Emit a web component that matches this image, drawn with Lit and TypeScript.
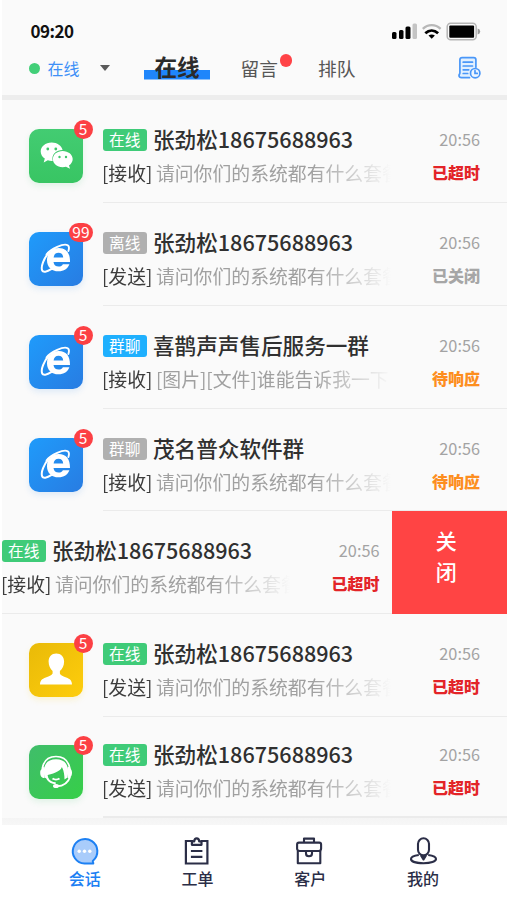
import { LitElement, html, css, svg } from "lit";
import { customElement, property } from "lit/decorators.js";
import { classMap } from "lit/directives/class-map.js";

interface Chat {
  avatar: "wechat" | "ie" | "person" | "agent";
  badge: string;
  tag: string;
  tagTone: "green" | "grey" | "blue";
  name: string;
  direction: string;
  text: string;
  status: string;
  statusTone: "late" | "closed" | "waiting";
  size?: "short" | "last";
  swiped?: boolean;
}

const QUESTION = "请问你们的系统都有什么套餐";
const CUSTOMER = "张劲松18675688963";

const CHATS: Chat[] = [
  { avatar: "wechat", badge: "5", tag: "在线", tagTone: "green", name: CUSTOMER, direction: "[接收]", text: QUESTION, status: "已超时", statusTone: "late" },
  { avatar: "ie", badge: "99", tag: "离线", tagTone: "grey", name: CUSTOMER, direction: "[发送]", text: QUESTION, status: "已关闭", statusTone: "closed" },
  { avatar: "ie", badge: "5", tag: "群聊", tagTone: "blue", name: "喜鹊声声售后服务一群", direction: "[接收]", text: "[图片][文件]谁能告诉我一下", status: "待响应", statusTone: "waiting" },
  { avatar: "ie", badge: "5", tag: "群聊", tagTone: "grey", name: "茂名普众软件群", direction: "[接收]", text: QUESTION, status: "待响应", statusTone: "waiting", size: "short" },
  { avatar: "wechat", badge: "", tag: "在线", tagTone: "green", name: CUSTOMER, direction: "[接收]", text: QUESTION, status: "已超时", statusTone: "late", swiped: true },
  { avatar: "person", badge: "5", tag: "在线", tagTone: "green", name: CUSTOMER, direction: "[发送]", text: QUESTION, status: "已超时", statusTone: "late" },
  { avatar: "agent", badge: "5", tag: "在线", tagTone: "green", name: CUSTOMER, direction: "[发送]", text: QUESTION, status: "已超时", statusTone: "late", size: "last" },
];

const GLYPHS = {
  wechat: svg`
    <path fill="#fff" d="M22.700 13.400c-6.300 0-11 4.100-11 9.100 0 2.900 1.500 5.400 4.100 7.100l-1.100 4 4.100-2.300c1.300.4 2.600.6 4 .6h.9c-.2-.7-.3-1.400-.3-2.100 0-5 4.400-8.700 9.700-8.700h.5c-1-4.500-5.400-7.700-10.900-7.700z"/>
    <path fill="#fff" d="M33.600 22c-5.600 0-9.700 3.600-9.700 8.100 0 4.500 4.100 8.200 9.700 8.200 1.200 0 2.400-.2 3.400-.5l4 2-1-3.300c2.300-1.500 3.700-3.800 3.700-6.400 0-4.500-4.500-8.100-10.100-8.100z"/>
    <circle cx="18.800" cy="20" r="1.400" fill="#3fc86b"/><circle cx="26.800" cy="20" r="1.400" fill="#3fc86b"/>
    <circle cx="30.500" cy="28" r="1.200" fill="#3fc86b"/><circle cx="37" cy="28" r="1.200" fill="#3fc86b"/>`,
  ie: svg`
    <path fill="#fff" fill-rule="evenodd" d="M41 30H24.500c.3 3 2.300 4.600 5.200 4.600 2 0 3.400-.8 4.200-2.300h6.500C38.800 36.800 34.900 39.300 29.500 39.300c-7 0-11.500-4.300-11.500-11.100C18 21 22.700 16 29.800 16 37 16 41.200 20.700 41 30zM24.600 25.600h9.600C34 22.500 32.400 20.800 29.500 20.800S25 22.600 24.600 25.600z"/>
    <path fill="none" stroke="#fff" stroke-width="1.900" stroke-linecap="round" d="M17.500 22.500C21.500 16.500 35 11 38.700 13.300c1.500 1 1.500 3.300.7 5.700"/>
    <path fill="none" stroke="#fff" stroke-width="2" stroke-linecap="round" d="M20 20.500C15 26 11.500 34.500 13.200 38.500c.8 1.900 4.600 1.600 9-1.300"/>`,
  person: svg`
    <path fill="#fff" d="M27.300 10.500c-4.700 0-7.700 3.400-7.700 8.100 0 4.200 1.700 7.500 4 9.300v2.600c-.4 1.600-3 2.500-6.800 4-4 1.500-5.600 3-5.800 6.900h32c-.2-3.900-1.800-5.400-5.800-6.900-3.800-1.500-6.100-2.400-6.300-4v-2.600c2.500-1.800 4.200-5.100 4.200-9.300 0-4.700-3.100-8.100-7.800-8.100z"/>`,
  agent: svg`
    <path fill="none" stroke="#fff" stroke-width="1.700" d="M13.200 24C14.500 15.500 20 11.500 27 11.500S39.500 15.500 41 24"/>
    <path fill="#fff" d="M14.200 22c.2 2-3 1.500-3 5.500 0 4.200 1.700 5.300 4.300 5.500V22zM40 22c.3 1.500 3 1.500 3 5.500s-1.700 5.500-4.300 5.500V22z"/>
    <path fill="#fff" d="M15.500 32.500C13 20 18 14.300 27 14.300S41 20 38.500 32.500l-3 2c0-4-.5-8.500-2.600-12.500-1 3.500-6 6-14.300 8l1 4.500z"/>
    <path fill="none" stroke="#fff" stroke-width="2" d="M18 33c2 3.500 4.500 5.200 8.700 5.200M41 32c-2 6-6.500 9-13 9.300M23.500 33.500c1.800 1.200 5.200 1.200 7 0"/>
    <ellipse cx="27" cy="41" rx="3" ry="2.100" fill="#fff"/>`,
};

@customElement("chat-avatar")
class ChatAvatar extends LitElement {
  @property() kind: Chat["avatar"] = "ie";
  @property() badge = "";

  static styles = css`
    :host { display: block; position: relative; width: 54px; height: 54px; }
    .tile { display: block; width: 54px; height: 54px; border-radius: 10px; }
    .wechat { background: linear-gradient(#43cc72, #38c563); box-shadow: 0 3px 6px rgba(56, 197, 99, .13); }
    .ie { background: linear-gradient(135deg, #1f9bfb, #287ce2); box-shadow: 0 3px 6px rgba(40, 130, 230, .13); }
    .person { background: linear-gradient(135deg, #e9ba08, #fecd0c); box-shadow: 0 3px 6px rgba(250, 200, 10, .15); }
    .agent { background: linear-gradient(135deg, #40bd6b, #36cf48); box-shadow: 0 3px 6px rgba(56, 197, 99, .13); }
    .badge {
      position: absolute; top: -9px; right: -9.500px; box-sizing: border-box;
      min-width: 19px; height: 19px; padding: 0 3px; border-radius: 10px;
      background: #fc4044; color: #fff; font-size: 15.500px; line-height: 17px; text-align: center;
    }
  `;

  render() {
    return html`
      <svg class="tile ${this.kind}" viewBox="0 0 54 54">${GLYPHS[this.kind]}</svg>
      <span class="badge">${this.badge}</span>`;
  }
}

@customElement("chat-row")
class ChatRow extends LitElement {
  @property({ attribute: false }) chat!: Chat;

  static styles = css`
    :host { display: block; }
    .row { display: flex; height: 103px; }
    .short { height: 102px; }
    .last { height: 101px; }
    .side { flex: none; width: 101px; box-sizing: border-box; padding: 29px 0 0 27px; }
    .last .side { padding-top: 27.500px; }
    .body {
      flex: 1; min-width: 0; box-sizing: border-box; padding: 24px 27px 0 0;
      border-bottom: 1px solid #ebebeb;
    }
    .last .body { padding-top: 22px; border-bottom-width: 2px; }
    .swiped .body { padding-right: 12px; }
    .line { display: flex; align-items: center; height: 32px; }
    .second { height: 34px; }
    .tag {
      flex: none; width: 43.500px; height: 22px; margin-right: 6.500px; border-radius: 3px; color: #fff;
      font-size: 15.700px; line-height: 21px; text-align: center;
    }
    .green { background: #3fcb78; }
    .grey { background: #b0b0b0; }
    .blue { background: #1fb0fe; }
    .name {
      flex: 1; margin-bottom: 1.500px; white-space: nowrap; color: #303030;
      font-size: 21.600px; font-weight: 500; line-height: 30px;
    }
    .time { margin-bottom: 1.500px; color: #a3a3a3; font-size: 16.300px; line-height: 30px; }
    .message {
      width: 312px; white-space: nowrap; color: #a0a0a0; font-size: 18.850px; line-height: 32px;
      -webkit-mask-image: linear-gradient(90deg, #000 210px, transparent 288px);
      mask-image: linear-gradient(90deg, #000 210px, transparent 288px);
    }
    .direction { margin: 0 3.500px 0 -1px; color: #3c3c3c; }
    .status { margin: 0 0 2px auto; font-size: 16px; font-weight: 900; line-height: 30px; white-space: nowrap; }
    .late { color: #e32428; }
    .closed { color: #a6a6a6; }
    .waiting { color: #fd8e1f; }
    .close {
      display: flex; flex-direction: column; align-items: center; flex: none; width: 115.500px; height: 103px;
      box-sizing: border-box; padding: 14px 6px 0 0; background: #ff4444; color: #fff;
      font-size: 21px; font-weight: 500; line-height: 31px;
    }
  `;

  render() {
    const c = this.chat;
    return html`
      <div class=${classMap({ row: true, short: c.size === "short", last: c.size === "last", swiped: !!c.swiped })}>
        ${c.swiped ? "" : html`<div class="side"><chat-avatar .kind=${c.avatar} .badge=${c.badge}></chat-avatar></div>`}
        <div class="body">
          <div class="line">
            <span class="tag ${c.tagTone}">${c.tag}</span>
            <span class="name">${c.name}</span>
            <span class="time">20:56</span>
          </div>
          <div class="line second">
            <div class="message"><span class="direction">${c.direction}</span>${c.text}</div>
            <span class="status ${c.statusTone}">${c.status}</span>
          </div>
        </div>
        ${c.swiped ? html`<div class="close"><span>关</span><span>闭</span></div>` : ""}
      </div>`;
  }
}

const NAV = [
  {
    label: "会话",
    icon: svg`<path fill="#a9ccfb" stroke="#1d80f3" stroke-width="2" stroke-linejoin="round" d="M23.300 26.600H14.500A12.300 12.300 0 1 1 23 23.700c-.8.900.3 1 .3 2.900z"/>
      <circle cx="9.200" cy="14.300" r="1.700" fill="#fff"/><circle cx="14.500" cy="14.300" r="1.700" fill="#fff"/><circle cx="19.800" cy="14.300" r="1.700" fill="#fff"/>`,
  },
  {
    label: "工单",
    icon: svg`<g fill="none" stroke="#2b2e47" stroke-width="2.200"><path d="M10 4H2.900v22.500h21.500V4h-6.500"/>
      <path stroke-linejoin="round" d="M8.900 7.800V4.300h2.300C11.400 2 12.400 1.300 13.700 1.300S16 2 16.200 4.300h2.300v3.500z"/><path d="M7.900 14h11.500M7.900 19.800h11.500"/></g>`,
  },
  {
    label: "客户",
    icon: svg`<g fill="none" stroke="#2b2e47" stroke-width="2.100" stroke-linejoin="round" transform="translate(-1.500 0)"><path d="M9.500 5.500V1.600h10v3.900M3.300 14v12.300h22.500V14"/>
      <path d="M4.400 5.600h20.400q1.800 0 1.800 2v3.800q0 2.600-2.600 2.600H5.200Q2.600 14 2.600 11.400V7.600q0-2 1.800-2z"/><path d="M11.500 14v2.500q0 2.800 3 2.800t3-2.800V14"/></g>`,
  },
  {
    label: "我的",
    icon: svg`<g fill="none" stroke="#2b2e47" stroke-width="2.100" stroke-linejoin="round"><rect x="9" y="1.300" width="11" height="17" rx="5.500"/>
      <path d="M9.800 18c-4.500.6-7.800 2-7.800 4 0 2.500 5.200 4.300 12.500 4.300S27 24.500 27 22c0-2-3.300-3.400-7.800-4"/><path fill="#2b2e47" d="M12.300 19l2.200 3.500 2.200-3.500z"/></g>`,
  },
];

@customElement("app-root")
class AppRoot extends LitElement {
  static styles = css`
    :host {
      display: flex; flex-direction: column; width: 507px; height: 900px; overflow: hidden; background: #fff;
      font-family: "Noto Sans CJK SC", "Noto Sans", sans-serif;
    }
    .screen { flex: none; height: 825px; margin-left: 2px; background: #fafafa; }
    .status { display: flex; align-items: center; height: 45px; padding: 16px 26px 0 28.500px; box-sizing: border-box; }
    .clock { flex: 1; font-size: 17px; font-weight: 700; line-height: 24px; color: #111; letter-spacing: -.5px; }
    .device { width: 92px; height: 20px; }
    .tabs { display: flex; align-items: center; height: 50px; padding: 0 26px 4px 27px; box-sizing: border-box; }
    .dot { width: 11px; height: 11px; border-radius: 50%; background: #42cf78; }
    .state { margin-left: 7.500px; color: #3e90f7; font-size: 16px; line-height: 24px; }
    .caret { width: 0; height: 0; margin: 0 33px 0 20.500px; border: 5.500px solid transparent; border-top: 6px solid #5a5a5a; border-bottom: 0; }
    .tab { width: 37px; color: #565656; font-size: 18.700px; line-height: 28px; white-space: nowrap; }
    .active {
      width: 66px; margin: 0 31px 0 .5px; padding-bottom: 3px; text-align: center; text-indent: 1px; color: #2b2b2b;
      font-size: 22.600px; font-weight: 700; line-height: 34px;
      background: linear-gradient(#1f86fb, #1f86fb) 0 20px / 66px 9.500px no-repeat;
    }
    .unread { position: relative; margin-right: 40.500px; }
    .unread::after {
      content: ""; position: absolute; right: -14.500px; top: 0; width: 12.500px; height: 12.500px; border-radius: 50%; background: #ff4347;
    }
    .history { width: 24px; height: 24px; margin-left: auto; }
    .band { height: 5px; background: #ededed; }
    .list { height: 718px; }
    .foot { height: 7px; background: linear-gradient(#f4f4f4, #f7f7f7); }
    .nav { display: flex; flex: 1; padding: 12px 27.500px 0 28.500px; }
    .item { flex: 1; display: flex; flex-direction: column; align-items: center; color: #2b2e47; font-size: 16px; font-weight: 500; line-height: 24px; }
    .item svg { width: 29px; height: 29px; overflow: visible; }
    .current { color: #1d80f3; }
  `;

  render() {
    return html`
      <main class="screen">
        <div class="status">
          <span class="clock">09:20</span>
          <svg class="device" viewBox="0 0 92 20">
            <rect x="3" y="11" width="4.500" height="7" rx="1.500"/><rect x="10" y="9" width="4.500" height="9" rx="1.500"/>
            <rect x="16.500" y="5.500" width="5" height="12.500" rx="1.500"/><rect x="23.500" y="2.500" width="4.500" height="15.500" rx="1.500" fill="#c4c4c4"/>
            <path fill="none" stroke="#b8b8b8" stroke-width="2.300" d="M33.800 7.800c5.200-5 12.600-5 17.800 0"/>
            <path fill="none" stroke="#000" stroke-width="2.700" d="M36.300 12.300c3.900-3.700 8.900-3.700 12.800 0"/>
            <path d="M39.500 14.500q3.200-2.200 6.400 0l-3.200 3.300z"/>
            <rect x="58.200" y="2.200" width="29" height="16.500" rx="3.500" fill="none" stroke="#b5b5b5" stroke-width="1.500"/>
            <rect x="60.300" y="4.500" width="24.800" height="12.200" rx="1"/><path fill="#9a9a9a" d="M88.600 7.500q2.600.6 2.600 3t-2.600 3z"/>
          </svg>
        </div>
        <div class="tabs">
          <span class="dot"></span><span class="state">在线</span><span class="caret"></span>
          <span class="tab active">在线</span><span class="tab unread">留言</span><span class="tab">排队</span>
          <svg class="history" viewBox="0 0 24 24" fill="none" stroke="#4a97f8" stroke-width="1.700" stroke-linecap="round">
            <path fill="#e2f0fe" d="M12.500 21.700H4.500c-1.500 0-2.500-.8-2.500-2.300 0-1 .9-1.400.9-2.400V3.800c0-1.500.8-2.200 2.200-2.200h11.600c1.400 0 2.200.7 2.200 2.200v7.500"/>
            <path d="M6.200 6.200h9.300M6.200 10h9.300M6.200 13.800h5.500M6.200 17.500h4.500"/>
            <circle cx="18.200" cy="17.200" r="4.700" fill="#eef6ff"/><path d="M18 14.700v2.700h2.300"/>
          </svg>
        </div>
        <div class="band"></div>
        <div class="list">${CHATS.map((chat) => html`<chat-row .chat=${chat}></chat-row>`)}</div>
        <div class="foot"></div>
      </main>
      <nav class="nav">
        ${NAV.map((n, i) => html`
          <div class=${classMap({ item: true, current: i === 0 })}>
            <svg viewBox="0 0 29 29">${n.icon}</svg><span>${n.label}</span>
          </div>`)}
      </nav>`;
  }
}
